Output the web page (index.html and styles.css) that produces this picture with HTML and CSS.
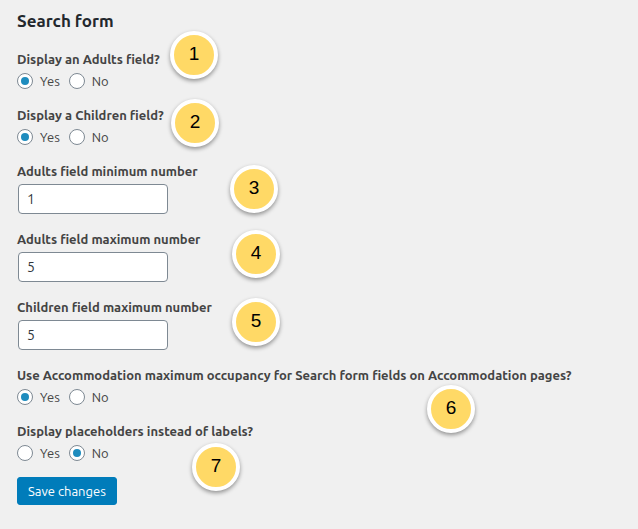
FILE: index.html
```html
<!DOCTYPE html>
<html lang="en">
<head>
<meta charset="utf-8">
<title>Search form settings</title>
<link rel="stylesheet" href="styles.css">
</head>
<body>
<form class="settings">
  <h2 class="title">Search form</h2>
  <fieldset class="group">
    <legend class="name">Display an Adults field?</legend>
    <div class="choices">
      <label class="choice"><input type="radio" name="adults" checked>Yes</label>
      <label class="choice"><input type="radio" name="adults">No</label>
    </div>
    <span class="marker marker-1">1</span>
  </fieldset>
  <fieldset class="group">
    <legend class="name">Display a Children field?</legend>
    <div class="choices">
      <label class="choice"><input type="radio" name="children" checked>Yes</label>
      <label class="choice"><input type="radio" name="children">No</label>
    </div>
    <span class="marker marker-2">2</span>
  </fieldset>
  <div class="group">
    <label class="name" for="adults-min">Adults field minimum number</label>
    <input class="number" id="adults-min" type="text" value="1">
    <span class="marker marker-3">3</span>
  </div>
  <div class="group">
    <label class="name" for="adults-max">Adults field maximum number</label>
    <input class="number" id="adults-max" type="text" value="5">
    <span class="marker marker-4">4</span>
  </div>
  <div class="group">
    <label class="name" for="children-max">Children field maximum number</label>
    <input class="number" id="children-max" type="text" value="5">
    <span class="marker marker-5">5</span>
  </div>
  <fieldset class="group">
    <legend class="name">Use Accommodation maximum occupancy for Search form fields on Accommodation pages?</legend>
    <div class="choices">
      <label class="choice"><input type="radio" name="occupancy" checked>Yes</label>
      <label class="choice"><input type="radio" name="occupancy">No</label>
    </div>
    <span class="marker marker-6">6</span>
  </fieldset>
  <fieldset class="group">
    <legend class="name">Display placeholders instead of labels?</legend>
    <div class="choices">
      <label class="choice"><input type="radio" name="placeholders">Yes</label>
      <label class="choice"><input type="radio" name="placeholders" checked>No</label>
    </div>
    <span class="marker marker-7">7</span>
  </fieldset>
  <button class="save" type="submit">Save changes</button>
</form>
</body>
</html>
```
FILE: styles.css
```css
* {
  box-sizing: border-box;
}

body {
  margin: 0;
  background: #f0f0f0;
  color: #444;
  font: 13px/20px Ubuntu, "Noto Sans", sans-serif;
}

.settings {
  padding: 8px 17px;
}

.title {
  margin: 0 0 15px;
  color: #23282d;
  font-size: 17px;
  line-height: 26px;
  font-weight: 600;
}

.group {
  position: relative;
  margin: 0 0 15px;
  padding: 0;
  border: 0;
  min-width: 0;
}

.name {
  display: block;
  margin-bottom: 3px;
  padding: 0;
  font-size: 13px;
  font-weight: 700;
}

.choices {
  display: flex;
  gap: 9px;
  height: 18px;
  align-items: center;
}

.choice {
  display: flex;
  align-items: center;
  gap: 7px;
}

.choice input {
  display: grid;
  place-items: center;
  width: 16px;
  height: 16px;
  margin: 0;
  border: 1px solid #7e8993;
  border-radius: 50%;
  background: #fff;
  appearance: none;
}

.choice input:checked::before {
  content: "";
  width: 8px;
  height: 8px;
  border-radius: 50%;
  background: #1e8cbe;
}

.number {
  display: block;
  width: 150px;
  height: 30px;
  margin: 0 0 0 1px;
  padding: 0 8px;
  border: 1px solid #7e8993;
  border-radius: 4px;
  background: #fff;
  color: #32373c;
  font: 14px/28px Ubuntu, "Noto Sans", sans-serif;
}

.marker {
  position: absolute;
  display: grid;
  place-items: center;
  width: 48px;
  height: 48px;
  padding-bottom: 2px;
  border: 4px solid #fff;
  border-radius: 50%;
  background: #ffd966;
  box-shadow: 0 2px 4px rgba(0, 0, 0, 0.4);
  color: #000;
  font: 19px/24px "Liberation Sans", sans-serif;
}

.marker-1 { left: 153px; top: -41px; }
.marker-2 { left: 154px; top: -29px; }
.marker-3 { left: 213px; top: 4px; }
.marker-4 { left: 215px; top: 1px; }
.marker-5 { left: 215px; top: 1px; }
.marker-6 { left: 410px; top: -3px; }
.marker-7 { left: 175px; top: -1px; }

.save {
  display: block;
  height: 28px;
  padding: 0 10px;
  border: 1px solid #007cba;
  border-radius: 3px;
  background: #007cba;
  color: #fff;
  font: 13px/26px Ubuntu, "Noto Sans", sans-serif;
}
```
